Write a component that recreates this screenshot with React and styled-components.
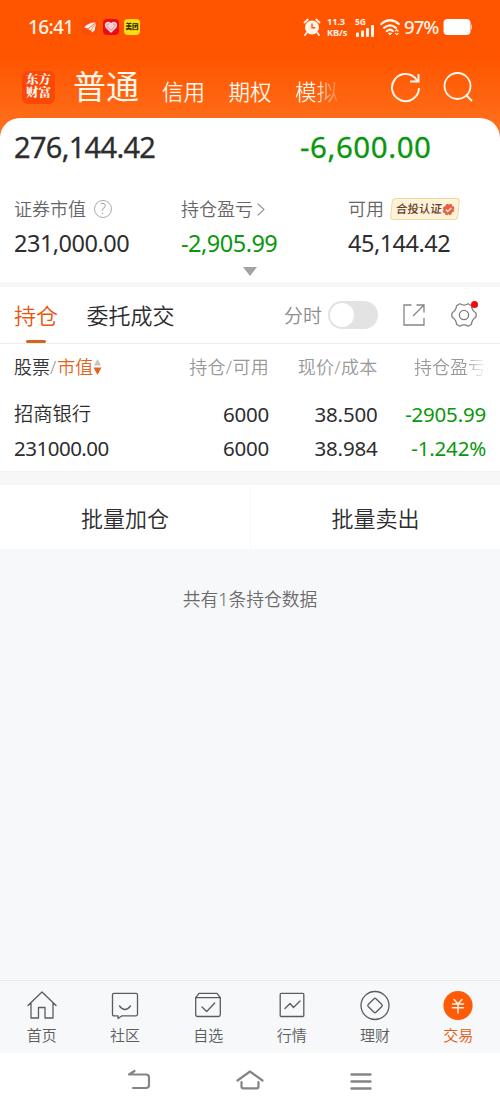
import React from "react";
import styled, { createGlobalStyle } from "styled-components";

const GlobalStyle = createGlobalStyle`
  * {
    box-sizing: border-box;
  }
  body {
    margin: 0;
    background: #f7f8fa;
    color: #2d2d2f;
    font-family: "Noto Sans", "Noto Sans CJK SC", sans-serif;
    font-weight: 350;
  }
`;

const Screen = styled.div`
  display: flex;
  flex-direction: column;
  width: 500px;
  height: 1111px;
  overflow: hidden;
  white-space: nowrap;
`;

const Top = styled.div`
  flex: none;
  background: linear-gradient(#ff5500 58px, #ff701c 130px);
`;

const StatusBar = styled.div`
  display: flex;
  align-items: center;
  height: 54px;
  padding: 0 28px;
  color: #fff4ea;
`;

const Clock = styled.div`
  width: 54px;
  font-size: 19px;
  font-weight: 500;
  line-height: 24px;
  letter-spacing: -0.6px;
`;

const AppIcons = styled.div`
  display: flex;
  gap: 5px;
  flex: 1;
`;

const AppIcon = styled.div`
  display: flex;
  align-items: center;
  justify-content: center;
  width: 16px;
  height: 16px;
  border-radius: 4px;
  background: ${(props) => props.$bg};
  color: #2a2400;
  font-size: 6.5px;
  font-weight: 900;
  line-height: 16px;
`;

const StatusIcons = styled.div`
  display: flex;
  align-items: center;
`;

const Speed = styled.div`
  display: flex;
  flex-direction: column;
  gap: 1px;
  width: 22px;
  margin: 0 6px;
  font-size: 9.2px;
  font-weight: 700;
  line-height: 10px;
  letter-spacing: -0.1px;
`;

const Signal = styled.div`
  display: flex;
  flex-direction: column;
  width: 20px;
  margin-right: 5px;
  font-size: 8.5px;
  font-weight: 700;
  line-height: 7px;
`;

const Percent = styled.div`
  width: 35px;
  margin: 0 4px;
  font-size: 18.5px;
  font-weight: 500;
  line-height: 24px;
  letter-spacing: -0.8px;
`;

const Header = styled.div`
  display: flex;
  align-items: center;
  height: 64px;
  padding: 2px 26px 0 22px;
  color: #fff6ec;
`;

const Logo = styled.div`
  width: 33px;
  height: 33px;
  margin-right: 18px;
  padding-top: 3px;
  border-radius: 6px;
  background: #fb4708;
  font-family: "Liberation Serif", "Noto Serif CJK SC", "Noto Sans CJK SC", serif;
  font-size: 12.5px;
  font-weight: 900;
  line-height: 13.5px;
  text-align: center;
`;

const MainMode = styled.div`
  width: 89px;
  font-size: 33px;
  font-weight: 400;
  line-height: 42px;
`;

const Mode = styled.div`
  width: 66.5px;
  padding-top: 10px;
  font-size: 21.5px;
  line-height: 26px;
  ${(props) =>
    props.$fade &&
    `
    width: 44px;
    background: linear-gradient(90deg, #fff6ec 45%, rgba(255, 246, 236, 0.15));
    background-clip: text;
    color: transparent;
  `}
`;

const HeaderIcons = styled.div`
  display: flex;
  gap: 20px;
  margin-left: auto;
`;

const Summary = styled.div`
  height: 164px;
  border-radius: 20px 20px 0 0;
  background: #fff;
`;

const Amount = styled.div`
  color: ${(props) => (props.$down ? "#0a970d" : "inherit")};
`;

const Totals = styled.div`
  display: grid;
  grid-template-columns: 286px 1fr;
  height: 72px;
  padding: 12px 14px 0;
  font-size: 29px;
  font-weight: 400;
  line-height: 34px;
  letter-spacing: -0.7px;
  -webkit-text-stroke: 0.3px;

  ${Amount} + ${Amount} {
    font-size: 29.5px;
    letter-spacing: 0.55px;
  }
`;

const Figures = styled.div`
  display: grid;
  grid-template-columns: repeat(3, 167px);
  height: 77px;
  padding-left: 14px;
`;

const Figure = styled.div`
  display: flex;
  flex-direction: column;
  font-size: 23.5px;
  font-weight: 400;
  line-height: 32px;
  letter-spacing: -0.5px;
`;

const FigureLabel = styled.div`
  display: flex;
  align-items: center;
  height: 37px;
  color: #666;
  font-size: 18px;
  font-weight: 350;
  letter-spacing: 0;
`;

const Help = styled.div`
  width: 18px;
  height: 18px;
  margin-left: 8px;
  border: 1px solid #aaa;
  border-radius: 50%;
  color: #999;
  font-size: 14px;
  line-height: 16px;
  text-align: center;
`;

const Badge = styled.div`
  display: flex;
  align-items: center;
  width: 68px;
  height: 22px;
  margin-left: 7px;
  padding-left: 4px;
  border: 1.5px solid #f3d894;
  border-radius: 4px;
  background: #fdf2dc;
  color: #68401f;
  font-size: 11.5px;
  font-weight: 500;
  transform: skewX(-6deg);
`;

const Expand = styled.div`
  width: 0;
  margin: 0 auto;
  border: 7.5px solid transparent;
  border-top: 9px solid #a2a2a2;
  border-bottom: 0;
`;

const Panel = styled.div`
  flex: none;
  margin-top: ${(props) => props.$gap}px;
  background: #fff;
  box-shadow: 0 -${(props) => props.$gap}px #f7f7f7;
`;

const Tabs = styled.div`
  display: flex;
  align-items: center;
  height: 57px;
  padding: 0 22px 0 14px;
  border-bottom: 1px solid #ececec;
`;

const Tab = styled.div`
  position: relative;
  margin-right: 28.5px;
  color: ${(props) => (props.$active ? "#e8560f" : "inherit")};
  font-size: 22px;
  line-height: 56px;

  &::after {
    content: "";
    display: ${(props) => (props.$active ? "block" : "none")};
    position: absolute;
    left: 12px;
    bottom: 0;
    width: 20px;
    height: 3px;
    border-radius: 2px;
    background: #d9621f;
  }
`;

const SwitchLabel = styled.div`
  margin: 0 6px 0 auto;
  color: #8c8c8c;
  font-size: 19px;
`;

const Switch = styled.div`
  width: 50px;
  height: 28px;
  margin-right: 24px;
  padding: 2px;
  border-radius: 14px;
  background: #e3e3e4;

  &::after {
    content: "";
    display: block;
    width: 24px;
    height: 24px;
    border-radius: 50%;
    background: #fff;
  }
`;

const Settings = styled.div`
  position: relative;
  display: flex;
  margin-left: 24px;
`;

const Dot = styled.div`
  position: absolute;
  top: 0;
  right: 0;
  width: 7px;
  height: 7px;
  border-radius: 50%;
  background: #f70808;
`;

const Row = styled.div`
  display: grid;
  grid-template-columns: 146px 109px 108.5px 108.5px;
  height: ${(props) => (props.$head ? 53 : 33.5)}px;
  padding: 0 14px;
  color: ${(props) => (props.$head ? "#999" : "inherit")};
  font-size: ${(props) => (props.$head ? 18 : 20.5)}px;
  font-weight: ${(props) => (props.$head ? 350 : 400)};
  line-height: ${(props) => (props.$head ? 46 : 34)}px;
`;

const Cell = styled.div`
  text-align: right;
  color: ${(props) => (props.$down ? "#0a970d" : "inherit")};
  letter-spacing: -0.2px;
`;

const HeadCell = styled(Cell)`
  letter-spacing: 0.3px;
`;

const StockName = styled.div`
  font-size: ${(props) => (props.$cjk ? "19.3px" : "inherit")};
  font-weight: ${(props) => (props.$cjk ? 350 : 400)};
  letter-spacing: ${(props) => (props.$cjk ? 0 : -0.5)}px;
`;

const SortHead = styled.div`
  display: flex;
  align-items: center;
  height: 46px;
`;

const Strong = styled.span`
  color: #333;
`;

const Sorted = styled.span`
  margin-left: 1px;
  color: #df6420;
`;

const FadeCell = styled(Cell)`
  background: linear-gradient(90deg, #999 80%, #f4f4f4 98%);
  background-clip: text;
  color: transparent;
  letter-spacing: 0;
`;

const TableEnd = styled.div`
  height: 8px;
  border-bottom: 1px solid #f2f2f2;
`;

const Batch = styled.div`
  display: grid;
  grid-template-columns: 1fr 1fr;
  height: 64px;
  font-size: 22px;
  line-height: 66px;
  text-align: center;
`;

const BatchButton = styled.div`
  & + & {
    border-left: 1px solid #f9f9f9;
  }
`;

const Count = styled.div`
  flex: 1;
  padding-top: 34px;
  color: #6b6b6b;
  font-size: 17.8px;
  line-height: 32px;
  text-align: center;
`;

const Nav = styled.div`
  display: grid;
  grid-template-columns: repeat(6, 1fr);
  height: 73px;
  border-top: 1px solid #ebebec;
`;

const NavItem = styled.div`
  display: flex;
  flex-direction: column;
  align-items: center;
  padding-top: 9px;
  color: ${(props) => (props.$active ? "#e8560f" : "#5c5c5c")};
  font-size: 15px;
  line-height: 26px;
`;

const SystemBar = styled.div`
  display: flex;
  justify-content: center;
  gap: 83px;
  height: 58px;
  padding-top: 14px;
  background: #fff;
`;

const Icon = ({ w, h = w, stroke = "currentColor", sw = 1.3, children }) => (
  <svg
    width={w}
    height={h}
    viewBox={`0 0 ${w} ${h}`}
    fill="none"
    stroke={stroke}
    strokeWidth={sw}
    strokeLinecap="round"
    strokeLinejoin="round"
  >
    {children}
  </svg>
);

const navItems = [
  {
    label: "首页",
    icon: <path d="M1 15.500 15 2l14 13.500M4 13v15h7.500V17.500h6.500v10.500h8V13" />,
  },
  {
    label: "社区",
    icon: (
      <>
        <path d="M4 3.300h22q1.500 0 1.500 1.500v19.500q0 1.500-1.500 1.500H12L8 28.500v-2.700H4q-1.500 0-1.500-1.500V4.800q0-1.500 1.500-1.500Z" />
        <path d="M9.500 16q5.500 7 11 0" />
      </>
    ),
  },
  {
    label: "自选",
    icon: (
      <>
        <path d="M2.700 7.700 6 3.300h18l3.300 4.400v17q0 1.800-1.800 1.800h-21q-1.800 0-1.800-1.800Z" />
        <path d="M2.700 7.700h24.600M9 17l4.700 4.500 8-8.500" />
      </>
    ),
  },
  {
    label: "行情",
    icon: (
      <>
        <rect x="3.200" y="3.300" width="23.600" height="23.200" rx="1" />
        <path d="m8 18.500 5-5 3.500 4 6.500-6.500" />
      </>
    ),
  },
  {
    label: "理财",
    icon: (
      <>
        <circle cx="15" cy="15.500" r="14" />
        <path d="m14 8.700-5.800 5.800q-1 1 0 2l5.800 5.800q1 1 2 0l5.800-5.800q1-1 0-2L16 8.700q-1-1-2 0Z" />
      </>
    ),
  },
  {
    label: "交易",
    active: true,
    icon: (
      <>
        <circle cx="15" cy="15.500" r="14.600" fill="#ff5a05" stroke="none" />
        <path
          d="m11 9.500 4 4.500 4-4.500M9.500 14h11M9.500 17.800h11M15 14v9"
          stroke="#fff1e2"
          strokeWidth="1.500"
        />
      </>
    ),
  },
];

const holdings = [
  { name: "招商银行", cjk: true, amount: "6000", price: "38.500", profit: "-2905.99" },
  { name: "231000.00", amount: "6000", price: "38.984", profit: "-1.242%" },
];

const Status = () => (
  <StatusBar>
    <Clock>16:41</Clock>
    <AppIcons>
      <AppIcon $bg="#fb4d0b">
        <svg width="14" height="14" viewBox="0 0 14 14" fill="#fff3e8">
          <path d="M1.200 7.500Q4 3 12.800 2.300L5 8.500ZM5.300 9.300 12.800 2.800 7.300 10.500ZM8 10.600 12.900 3.200 11.800 10 9.500 12.500Z" />
        </svg>
      </AppIcon>
      <AppIcon $bg="#e90d1b">
        <Icon w={14} stroke="#ffdfe0" sw={1.3}>
          <path
            d="M7 12 2.200 7.200Q.6 4.500 2.800 2.900 5 1.800 7 4q2-2.200 4.200-1.100 2.200 1.600.6 4.300Z"
            fill="#f3949a"
          />
          <path d="m4 5.500 3 3 3-3M5.500 4.500 7 6l1.500-1.500" />
        </Icon>
      </AppIcon>
      <AppIcon $bg="#fbdc12">美团</AppIcon>
    </AppIcons>
    <StatusIcons>
      <svg width="18" height="18" viewBox="0 0 18 18">
        <circle cx="9" cy="9.500" r="7" fill="#fff4ea" />
        <path
          d="M1.500 4.500 4.800 1.500M16.500 4.500l-3.300-3M3.500 15l-1.500 2M14.500 15l1.500 2"
          stroke="#fff4ea"
          strokeWidth="1.800"
          strokeLinecap="round"
        />
        <path d="M9 5.500v4.300h3.300" fill="none" stroke="#ff5500" strokeWidth="1.400" />
      </svg>
      <Speed>
        <span>11.3</span>
        <span>KB/s</span>
      </Speed>
      <Signal>
        5G
        <svg width="20" height="12" viewBox="0 0 20 12" fill="#fff4ea">
          <rect x="1" y="7.500" width="3" height="4.500" rx="1" />
          <rect x="6" y="5.500" width="3" height="6.500" rx="1" />
          <rect x="11" y="3" width="3" height="9" rx="1" />
          <rect x="16" y="0" width="3" height="12" rx="1" />
        </svg>
      </Signal>
      <Icon w={20} h={18} sw={2.2}>
        <path d="M1.200 6Q10-1.500 18.800 6M4 9.800q6-5 12 0M6.800 13q3.200-2.500 6 0" />
        <path d="m8.500 15.500 1.500 1.500 1.500-1.500Z" fill="currentColor" strokeWidth="1" />
        <path d="m15.500 13 1.300-1.300 1.300 1.300M15.500 15.300l1.300 1.300 1.300-1.300" strokeWidth="1.200" />
      </Icon>
      <Percent>97%</Percent>
      <svg width="29" height="18" viewBox="0 0 29 18">
        <rect x=".5" y="1" width="27" height="16" rx="4" fill="#fff" />
        <path d="M28 6.500q1 0 1 1.200v2.600q0 1.200-1 1.200Z" fill="#ffc9a6" />
      </svg>
    </StatusIcons>
  </StatusBar>
);

const App = () => (
  <Screen>
    <GlobalStyle />
    <Top>
      <Status />
      <Header>
        <Logo>
          东方
          <br />
          财富
        </Logo>
        <MainMode>普通</MainMode>
        <Mode>信用</Mode>
        <Mode>期权</Mode>
        <Mode $fade>模拟</Mode>
        <HeaderIcons>
          <Icon w={32} sw={2}>
            <path
              d="M29 17A13.500 13.500 0 1 1 27 9.500M28.500 3v7.500h-8.500"
              strokeLinecap="butt"
              strokeLinejoin="miter"
            />
          </Icon>
          <Icon w={32} sw={1.8}>
            <circle cx="15.500" cy="15" r="13" />
            <path d="m24.500 24.500 5 5" />
          </Icon>
        </HeaderIcons>
      </Header>
      <Summary>
        <Totals>
          <Amount>276,144.42</Amount>
          <Amount $down>-6,600.00</Amount>
        </Totals>
        <Figures>
          <Figure>
            <FigureLabel>
              证券市值<Help>?</Help>
            </FigureLabel>
            <Amount>231,000.00</Amount>
          </Figure>
          <Figure>
            <FigureLabel>
              持仓盈亏
              <Icon w={16} h={16} sw={1.2} stroke="#999">
                <path d="m5 3 6 5.500L5 14" />
              </Icon>
            </FigureLabel>
            <Amount $down>-2,905.99</Amount>
          </Figure>
          <Figure>
            <FigureLabel>
              可用
              <Badge>
                合投认证
                <svg width="13" height="13" viewBox="0 0 13 13">
                  <circle
                    cx="6.500"
                    cy="6.500"
                    r="4.900"
                    fill="#e9603f"
                    stroke="#e9603f"
                    strokeWidth="1.800"
                    strokeDasharray="2.500 1.350"
                  />
                  <path d="m4 6.500 2 2L9.300 5" fill="none" stroke="#fff0dc" strokeWidth="1.400" />
                </svg>
              </Badge>
            </FigureLabel>
            <Amount>45,144.42</Amount>
          </Figure>
        </Figures>
        <Expand />
      </Summary>
    </Top>

    <Panel $gap={5}>
      <Tabs>
        <Tab $active>持仓</Tab>
        <Tab>委托成交</Tab>
        <SwitchLabel>分时</SwitchLabel>
        <Switch />
        <Icon w={24} stroke="#858585">
          <path
            d="M9.500 2H2v20h20v-7M14.500 2h7.500v7.500M22 2 11 13"
            strokeLinecap="butt"
            strokeLinejoin="miter"
          />
        </Icon>
        <Settings>
          <Icon w={28} stroke="#7d7d7d">
            <path d="M9.800 2.800q4.200 2.600 8.400 0l3.300 1.900q.2 4.600 4.300 7 .8 2.300 0 4.600-4.100 2.400-4.300 7l-3.300 1.900q-4.200-2.600-8.400 0l-3.300-1.900q-.2-4.600-4.300-7-.8-2.300 0-4.600 4.100-2.400 4.300-7Z" />
            <circle cx="14" cy="14" r="4.600" />
          </Icon>
          <Dot />
        </Settings>
      </Tabs>
      <Row $head>
        <SortHead>
          <Strong>股票</Strong>/<Sorted>市值</Sorted>
          <svg width="9" height="18" viewBox="0 0 9 18">
            <path d="M1 7.500 4.500 1 8 7.500Z" fill="#c4c4c4" />
            <path d="M.5 9.500h8l-4 7.500Z" fill="#df6420" />
          </svg>
        </SortHead>
        <HeadCell>持仓/可用</HeadCell>
        <HeadCell>现价/成本</HeadCell>
        <FadeCell>持仓盈亏</FadeCell>
      </Row>
      {holdings.map((item) => (
        <Row key={item.name}>
          <StockName $cjk={item.cjk}>{item.name}</StockName>
          <Cell>{item.amount}</Cell>
          <Cell>{item.price}</Cell>
          <Cell $down>{item.profit}</Cell>
        </Row>
      ))}
      <TableEnd />
    </Panel>

    <Panel $gap={13}>
      <Batch>
        <BatchButton>批量加仓</BatchButton>
        <BatchButton>批量卖出</BatchButton>
      </Batch>
    </Panel>

    <Count>共有1条持仓数据</Count>

    <Nav>
      {navItems.map(({ label, icon, active }) => (
        <NavItem key={label} $active={active}>
          <Icon w={30} h={32}>
            {icon}
          </Icon>
          {label}
        </NavItem>
      ))}
    </Nav>
    <SystemBar>
      <Icon w={28} h={28} stroke="#858585" sw={2.2}>
        <path d="M9.500 4 4 7.500h17q3 0 3 3V18q0 3-3 3H8" />
      </Icon>
      <Icon w={28} h={28} stroke="#858585" sw={2.2}>
        <path d="M1.500 13.500 14 4.500l12.500 9M5.500 15v4.500q0 1.800 1.800 1.800h13.400q1.800 0 1.800-1.800V15" />
      </Icon>
      <Icon w={28} h={28} stroke="#858585" sw={2.4}>
        <path d="M4.500 7.500h19M4.500 14.500h19M4.500 21.500h19" />
      </Icon>
    </SystemBar>
  </Screen>
);

export default App;
